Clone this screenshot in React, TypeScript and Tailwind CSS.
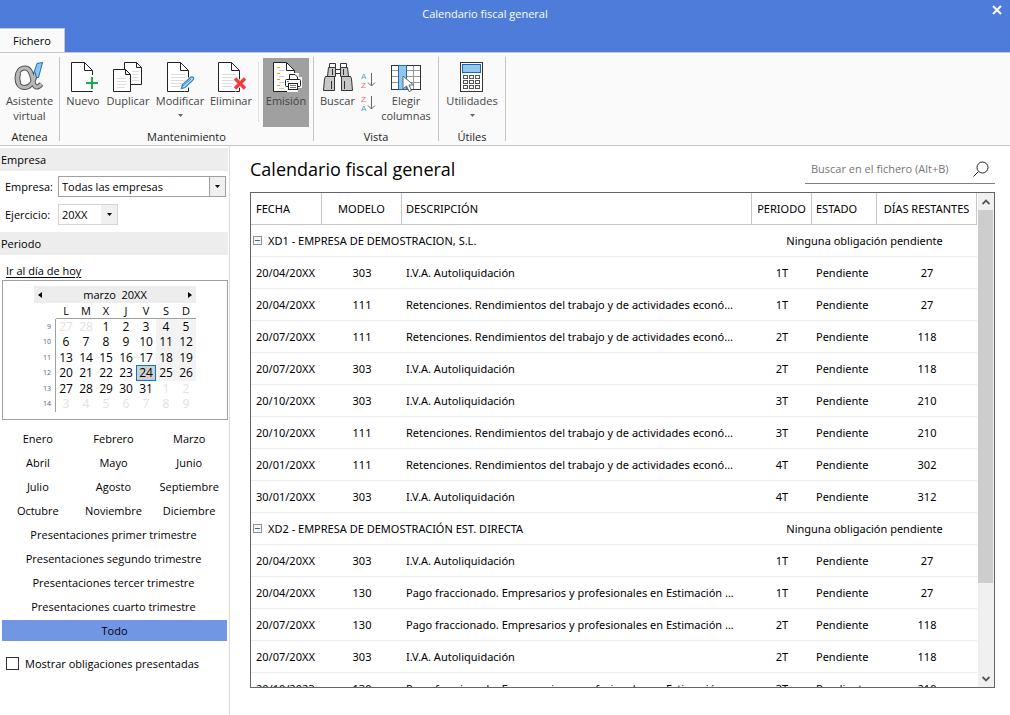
import { useState } from 'react';
import type { ReactNode } from 'react';

type Row = { fecha: string; modelo: string; descripcion: string; periodo: string; dias: number };

const RETENCIONES = 'Retenciones. Rendimientos del trabajo y de actividades econó...';
const PAGO = 'Pago fraccionado. Empresarios y profesionales en Estimación ...';
const IVA = 'I.V.A. Autoliquidación';

const empresas: { nombre: string; filas: Row[] }[] = [
    {
        nombre: 'XD1 - EMPRESA DE DEMOSTRACION, S.L.',
        filas: [
            { fecha: '20/04/20XX', modelo: '303', descripcion: IVA, periodo: '1T', dias: 27 },
            { fecha: '20/04/20XX', modelo: '111', descripcion: RETENCIONES, periodo: '1T', dias: 27 },
            { fecha: '20/07/20XX', modelo: '111', descripcion: RETENCIONES, periodo: '2T', dias: 118 },
            { fecha: '20/07/20XX', modelo: '303', descripcion: IVA, periodo: '2T', dias: 118 },
            { fecha: '20/10/20XX', modelo: '303', descripcion: IVA, periodo: '3T', dias: 210 },
            { fecha: '20/10/20XX', modelo: '111', descripcion: RETENCIONES, periodo: '3T', dias: 210 },
            { fecha: '20/01/20XX', modelo: '111', descripcion: RETENCIONES, periodo: '4T', dias: 302 },
            { fecha: '30/01/20XX', modelo: '303', descripcion: IVA, periodo: '4T', dias: 312 },
        ],
    },
    {
        nombre: 'XD2 - EMPRESA DE DEMOSTRACIÓN EST. DIRECTA',
        filas: [
            { fecha: '20/04/20XX', modelo: '303', descripcion: IVA, periodo: '1T', dias: 27 },
            { fecha: '20/04/20XX', modelo: '130', descripcion: PAGO, periodo: '1T', dias: 27 },
            { fecha: '20/07/20XX', modelo: '130', descripcion: PAGO, periodo: '2T', dias: 118 },
            { fecha: '20/07/20XX', modelo: '303', descripcion: IVA, periodo: '2T', dias: 118 },
            { fecha: '20/10/2023', modelo: '130', descripcion: PAGO, periodo: '3T', dias: 210 },
        ],
    },
];

const semanas = [
    { num: 9, dias: [27, 28, 1, 2, 3, 4, 5] },
    { num: 10, dias: [6, 7, 8, 9, 10, 11, 12] },
    { num: 11, dias: [13, 14, 15, 16, 17, 18, 19] },
    { num: 12, dias: [20, 21, 22, 23, 24, 25, 26] },
    { num: 13, dias: [27, 28, 29, 30, 31, 1, 2] },
    { num: 14, dias: [3, 4, 5, 6, 7, 8, 9] },
];

const meses = ['Enero', 'Febrero', 'Marzo', 'Abril', 'Mayo', 'Junio', 'Julio', 'Agosto', 'Septiembre', 'Octubre', 'Noviembre', 'Diciembre'];
const trimestres = ['primer', 'segundo', 'tercer', 'cuarto'];

/* ---------- Icons ---------- */

const Icon = ({ children }: { children: ReactNode }) => (
    <svg width="32" height="31" viewBox="0 0 32 31" fill="none" className="shrink-0" aria-hidden="true">
        {children}
    </svg>
);

const Sheet = ({ x, lines }: { x: number; lines?: boolean }) => (
    <g transform={`translate(${x} 0)`}>
        <path d="M.5 .5H13.5L21.5 8.5V29.5H.5Z" fill="#fff" stroke="#222" />
        <path d="M13.5 .5V8.5H21.5" stroke="#222" />
        {lines && <path d="M4 12.5H18M4 15.5H18M4 18.5H18M4 21.5H15M4 24.5H14" stroke="#dcdcdc" />}
    </g>
);

const LOOP = 'M22 10C20 20 16 25.500 10.500 25.500C5.500 25.500 3 21.500 3 16C3 10 6 6 11 6C17 6 18 14 19 19C20 25 22.500 27.500 27.500 22';

const AssistantIcon = () => (
    <Icon>
        <path d={LOOP} stroke="#555" strokeWidth="5" />
        <path d="M5 11C3.500 14 3.500 18 5 21.500" stroke="#555" strokeWidth="5" />
        <path d={LOOP} stroke="#b8b8b8" strokeWidth="3" />
        <path d="M5 11C3.500 14 3.500 18 5 21.500" stroke="#b8b8b8" strokeWidth="3" />
        <path d="M23 1.500L28.500 .5L24.500 15.500H22.500L20.500 9Z" fill="#8ec5ee" stroke="#1f6fb5" />
    </Icon>
);

const NewIcon = () => (
    <Icon>
        <Sheet x={4} />
        <path d="M25 13V29M17 21H32" stroke="#fafafa" strokeWidth="5" />
        <path d="M25 15V27M19 21H31" stroke="#1aab50" strokeWidth="2" />
    </Icon>
);

const CopyIcon = () => (
    <Icon>
        <path d="M12.500 .5H24.500L29.500 5.500V22.500H12.500Z" fill="#fff" stroke="#222" />
        <path d="M24.500 .5V5.500H29.500" stroke="#222" />
        <path d="M20 9.500H27M20 12.500H27M20 15.500H27M20 18.500H27" stroke="#dcdcdc" />
        <path d="M1.500 7.500H13.500L18.500 12.500V29.500H1.500Z" fill="#fff" stroke="#222" />
        <path d="M13.500 7.500V12.500H18.500" stroke="#222" />
        <path d="M5 16.500H14M5 19.500H14M5 22.500H14M5 25.500H13" stroke="#dcdcdc" />
    </Icon>
);

const EditIcon = () => (
    <Icon>
        <Sheet x={3} lines />
        <path d="M18 27L29 16" stroke="#fafafa" strokeWidth="7" />
        <path d="M17.500 26.500L18.500 22.500L26.500 15.500Q28 14.500 29.500 15.500Q30 17 28.500 18.500L21 25.500Z" fill="#cfe5f7" stroke="#2b87cf" strokeWidth="1.300" />
        <path d="M19 24L27 17" stroke="#2b87cf" />
    </Icon>
);

const DeleteIcon = () => (
    <Icon>
        <Sheet x={3} lines />
        <path d="M19 15L31 28M31 15L19 28" stroke="#fafafa" strokeWidth="5" />
        <path d="M20 16.500L30 26.500M30 16.500L20 26.500" stroke="#f03c3c" strokeWidth="3.500" />
    </Icon>
);

const PrintIcon = () => (
    <Icon>
        <Sheet x={3} />
        <path d="M7 5.500H10M7 11.500H10M7 17.500H10M7 23.500H10" stroke="#f59a23" strokeWidth="1.200" />
        <path d="M9 8.500H14M9 14.500H14M9 20.500H14M9 26.500H14" stroke="#ccc" />
        <path d="M14 15H18V11H29V15H32V26H28V30H17V26H14Z" fill="#fafafa" />
        <path d="M19.500 17V12.500H25L27.500 15V17" fill="#fff" stroke="#222" />
        <rect x="15.500" y="17.500" width="15" height="7" rx="1" fill="#fff" stroke="#222" />
        <rect x="18.500" y="21.500" width="9" height="6" fill="#fff" stroke="#222" />
        <path d="M20 23.500H26M20 25.500H26" stroke="#777" />
        <path d="M17 19.500H19" stroke="#2b87cf" />
    </Icon>
);

const Barrel = () => (
    <g fill="#c9c6c6" stroke="#333">
        <path d="M7.500 1.500H13.500V5.500H7.500Z" fill="#fff" />
        <path d="M6.500 5.500H13.500V14.500H5.500Z" />
        <path d="M3.500 14.500H12.500V28.500H1.500L2.500 17Z" />
        <path d="M9.500 19V27M10.500 7V13" />
    </g>
);

const BinocularsIcon = () => (
    <Icon>
        <path d="M13.500 7.500H18.500V11.500H13.500Z" fill="#fff" stroke="#333" />
        <Barrel />
        <g transform="translate(32 0) scale(-1 1)">
            <Barrel />
        </g>
    </Icon>
);

const SortIcon = ({ desc }: { desc?: boolean }) => (
    <svg width="15" height="19" viewBox="0 0 15 19" fill="none" aria-hidden="true">
        <text x="0" y="8" fontFamily="Liberation Sans, sans-serif" fontSize="8" fill={desc ? '#e86a6a' : '#4a9fdc'}>{desc ? 'Z' : 'A'}</text>
        <text x="0" y="17" fontFamily="Liberation Sans, sans-serif" fontSize="8" fill={desc ? '#4a9fdc' : '#e86a6a'}>{desc ? 'A' : 'Z'}</text>
        <path d="M10.500 2V15M7 11.500L10.500 15L14 11.500" stroke="#666" />
    </svg>
);

const ColumnsIcon = () => (
    <Icon>
        <rect x="1.500" y="3.500" width="29" height="24" fill="#fff" stroke="#333" />
        <path d="M2 8.500H30M2 14.500H30M2 20.500H30M23.500 4V27" stroke="#999" />
        <rect x="8.500" y="3.500" width="8" height="24" fill="#8fc6ee" stroke="#1b6cb4" />
        <path d="M13 14V27L16.500 24L19 29.500L21.500 28.500L19 23H23.500Z" fill="#fff" stroke="#666" />
    </Icon>
);

const CalculatorIcon = () => (
    <Icon>
        <rect x="4.500" y=".5" width="22" height="29" fill="#fff" stroke="#333" />
        <rect x="6.500" y="2.500" width="18" height="8" fill="#92c9f0" stroke="#1569b3" />
        {[13.5, 18.5, 23.5].map((y) =>
            [7.5, 13.5, 19.5].map((x) => <rect key={`${x}-${y}`} x={x} y={y} width="4" height="3" stroke="#555" />)
        )}
    </Icon>
);

const Caret = ({ className }: { className?: string }) => (
    <svg width="5" height="3" viewBox="0 0 5 3" className={className} fill="currentColor" aria-hidden="true">
        <path d="M0 0H5L2.500 3Z" />
    </svg>
);

/* ---------- Ribbon ---------- */

type RibbonButtonProps = { icon: ReactNode; label: string; width: string; menu?: boolean; active?: boolean };

const RibbonButton = ({ icon, label, width, menu, active }: RibbonButtonProps) => (
    <button type="button" className={`flex h-[69px] shrink-0 flex-col items-center pt-1 text-[#444] ${width} ${active ? 'bg-[#a0a0a0]' : ''}`}>
        {icon}
        <span className="leading-[15px]">{label}</span>
        {menu && <Caret className="mt-1.5 text-[#666]" />}
    </button>
);

const RibbonGroup = ({ title, children }: { title: string; children: ReactNode }) => (
    <section className="flex flex-col border-r border-[#c6c6c6] pt-px">
        <div className="flex">{children}</div>
        <h2 className="mt-1.5 text-center leading-2 text-[#222]">{title}</h2>
    </section>
);

const Ribbon = () => (
    <div className="flex border-y border-[#c6c6c6] bg-[#fafafa] py-1">
        <RibbonGroup title="Atenea">
            <RibbonButton icon={<AssistantIcon />} label="Asistente virtual" width="w-[59px]" />
        </RibbonGroup>
        <RibbonGroup title="Mantenimiento">
            <RibbonButton icon={<NewIcon />} label="Nuevo" width="w-[46px]" />
            <RibbonButton icon={<CopyIcon />} label="Duplicar" width="w-[44px]" />
            <RibbonButton icon={<EditIcon />} label="Modificar" width="w-[60px]" menu />
            <RibbonButton icon={<DeleteIcon />} label="Eliminar" width="w-[42px]" />
            <div className="mt-1 mr-1 ml-1.5 h-[60px] w-px bg-[#dedede]" />
            <RibbonButton icon={<PrintIcon />} label="Emisión" width="w-[46px]" active />
            <div className="w-1" />
        </RibbonGroup>
        <RibbonGroup title="Vista">
            <RibbonButton icon={<BinocularsIcon />} label="Buscar" width="w-[47px]" />
            <div className="flex w-[17px] flex-col gap-1 pt-[13px]">
                <button type="button" aria-label="Orden ascendente"><SortIcon /></button>
                <button type="button" aria-label="Orden descendente"><SortIcon desc /></button>
            </div>
            <RibbonButton icon={<ColumnsIcon />} label="Elegir columnas" width="w-14" />
            <div className="w-1" />
        </RibbonGroup>
        <RibbonGroup title="Útiles">
            <RibbonButton icon={<CalculatorIcon />} label="Utilidades" width="w-[66px]" menu />
        </RibbonGroup>
    </div>
);

/* ---------- Sidebar ---------- */

const SideHeading = ({ children }: { children: ReactNode }) => (
    <h2 className="mr-px h-[23px] bg-[#ededed] pl-px leading-[23px]">{children}</h2>
);

const Calendar = () => (
    <div className="mr-px ml-0.5 border border-[#a0a0a0] pt-[5px] pb-[7px]">
        <div className="mx-auto w-[162px]">
            <div className="flex h-[17px] items-center justify-between bg-[#ededed] px-1">
                <button type="button" aria-label="Mes anterior">
                    <svg width="4" height="6" viewBox="0 0 4 6"><path d="M4 0V6L0 3Z" /></svg>
                </button>
                <span className="whitespace-pre">marzo  20XX</span>
                <button type="button" aria-label="Mes siguiente">
                    <svg width="4" height="6" viewBox="0 0 4 6"><path d="M0 0V6L4 3Z" /></svg>
                </button>
            </div>
            <table className="w-full table-fixed border-separate border-spacing-0 text-center leading-[14px]">
                <thead>
                    <tr className="h-4">
                        <th className="w-[22px] p-0" />
                        {['L', 'M', 'X', 'J', 'V', 'S', 'D'].map((d) => (
                            <th key={d} className="border-b border-[#a0a0a0] p-0 font-normal">{d}</th>
                        ))}
                    </tr>
                </thead>
                <tbody>
                    {semanas.map((semana, fila) => (
                        <tr key={semana.num} className="odd:h-[15px] even:h-4">
                            <th className="border-r border-[#a0a0a0] p-0 pr-1 text-right text-[7px] font-normal text-[#4a6484]">{semana.num}</th>
                            {semana.dias.map((dia, i) => {
                                const fuera = (fila === 0 && dia > 20) || (fila > 3 && dia < 10);
                                const hoy = dia === 24;
                                const finde = i > 4 && fila < 4;
                                return (
                                    <td
                                        key={dia}
                                        className={`p-0 text-[12px] ${fuera ? 'text-[#e2e2e2]' : ''} ${finde ? 'bg-[#f3f3f3]' : ''} ${hoy ? 'bg-[#d0d0d0] outline -outline-offset-1 outline-[#0078d7]' : ''}`}
                                    >
                                        {dia}
                                    </td>
                                );
                            })}
                        </tr>
                    ))}
                </tbody>
            </table>
        </div>
    </div>
);

const Sidebar = () => {
    const [mostrar, setMostrar] = useState(false);

    return (
        <aside className="w-[230px] shrink-0 border-r border-[#dcdcdc] pt-0.5">
            <SideHeading>Empresa</SideHeading>
            <div className="grid grid-cols-[53px_1fr] items-center gap-y-[7px] pt-[5px] pr-[3px] pb-[7px] pl-[5px]">
                <label htmlFor="empresa">Empresa:</label>
                <div className="grid h-[21px] border border-[#a0a0a0]">
                    <select id="empresa" className="col-start-1 row-start-1 appearance-none pl-[3px]">
                        <option>Todas las empresas</option>
                    </select>
                    <span className="pointer-events-none col-start-1 row-start-1 flex w-4 items-center justify-center justify-self-end border-l border-[#a0a0a0] bg-[#f0f0f0]">
                        <Caret />
                    </span>
                </div>
                <label htmlFor="ejercicio">Ejercicio:</label>
                <div className="grid h-[21px] w-[60px] border border-[#d4d4d4]">
                    <select id="ejercicio" className="col-start-1 row-start-1 appearance-none pl-[3px]">
                        <option>20XX</option>
                    </select>
                    <span className="pointer-events-none col-start-1 row-start-1 flex w-4 items-center justify-center justify-self-end bg-[#f0f0f0]">
                        <Caret />
                    </span>
                </div>
            </div>
            <SideHeading>Periodo</SideHeading>
            <div className="flex h-[25px] items-end pb-px pl-1.5">
                <a href="#hoy" className="underline underline-offset-2">Ir al día de hoy</a>
            </div>
            <Calendar />
            <div className="mr-0.5 grid grid-cols-3 pt-[7px]">
                {meses.map((mes) => (
                    <button key={mes} type="button" className="h-6">{mes}</button>
                ))}
            </div>
            <div className="flex flex-col">
                {trimestres.map((t) => (
                    <button key={t} type="button" className="mr-0.5 h-6">Presentaciones {t} trimestre</button>
                ))}
                <button type="button" className="mx-0.5 mt-px h-[21px] bg-[#7096e4]">Todo</button>
            </div>
            <label className="mt-4 flex h-[13px] items-center gap-1.5 pl-1.5">
                <input
                    type="checkbox"
                    checked={mostrar}
                    onChange={(e) => setMostrar(e.target.checked)}
                    className="size-[13px] appearance-none border border-[#333] bg-white checked:bg-[#4d7cdb]"
                />
                Mostrar obligaciones presentadas
            </label>
        </aside>
    );
};

/* ---------- Table ---------- */

const HEAD = 'border-r border-b border-[#c6c6c6] p-0 font-normal';
const CELL = 'border-b border-[#ececec] p-0';

const FiscalTable = () => (
    <table className="w-full table-fixed border-separate border-spacing-0">
        <thead>
            <tr className="h-8">
                <th className={`${HEAD} w-[71px] pl-[5px] text-left`}>FECHA</th>
                <th className={`${HEAD} w-20`}>MODELO</th>
                <th className={`${HEAD} pl-1 text-left`}>DESCRIPCIÓN</th>
                <th className={`${HEAD} w-[60px]`}>PERIODO</th>
                <th className={`${HEAD} w-[65px] pl-1 text-left`}>ESTADO</th>
                <th className={`${HEAD} w-[100px]`}>DÍAS RESTANTES</th>
            </tr>
        </thead>
        {empresas.map((empresa) => (
            <tbody key={empresa.nombre}>
                <tr className="h-8">
                    <td colSpan={3} className={CELL}>
                        <div className="flex items-center gap-1.5 pl-0.5">
                            <button type="button" aria-label="Contraer" className="flex size-[9px] items-center justify-center border border-[#8f8f8f] bg-[#f6f6f6]">
                                <span className="h-px w-[5px] bg-[#3f5fae]" />
                            </button>
                            {empresa.nombre}
                        </div>
                    </td>
                    <td colSpan={3} className={`${CELL} text-center`}>Ninguna obligación pendiente</td>
                </tr>
                {empresa.filas.map((fila, i) => (
                    <tr key={i} className="h-8">
                        <td className={`${CELL} pl-[5px] whitespace-nowrap`}>{fila.fecha}</td>
                        <td className={`${CELL} text-center`}>{fila.modelo}</td>
                        <td className={`${CELL} truncate pl-1`}>{fila.descripcion}</td>
                        <td className={`${CELL} text-center`}>{fila.periodo}</td>
                        <td className={`${CELL} pl-1`}>Pendiente</td>
                        <td className={`${CELL} text-center`}>{fila.dias}</td>
                    </tr>
                ))}
            </tbody>
        ))}
    </table>
);

const ScrollBar = () => (
    <div className="ml-px flex w-4 shrink-0 flex-col items-center bg-[#f0f0f0]">
        <div className="flex h-[17px] items-center">
            <svg width="8" height="6" viewBox="0 0 8 6" fill="none"><path d="M.5 5L4 1.500L7.500 5" stroke="#555" strokeWidth="1.800" /></svg>
        </div>
        <div className="flex w-full flex-1 flex-col pr-px">
            <div className="h-[81%] bg-[#cdcdcd]" />
        </div>
        <div className="flex h-[17px] items-center">
            <svg width="8" height="6" viewBox="0 0 8 6" fill="none"><path d="M.5 1L4 4.500L7.500 1" stroke="#555" strokeWidth="1.800" /></svg>
        </div>
    </div>
);

const App = () => {
    const [busqueda, setBusqueda] = useState('');

    return (
        <div className="flex h-screen flex-col overflow-hidden bg-white font-['Open_Sans','Noto_Sans',sans-serif] text-[11px] leading-4 text-black">
            <header className="bg-[#4d7cdb]">
                <div className="flex h-7 items-center text-white">
                    <h1 className="flex-1 text-center">Calendario fiscal general</h1>
                    <button type="button" aria-label="Cerrar" className="flex w-10 justify-end pr-2 pb-2">
                        <svg width="10" height="10" viewBox="0 0 10 10"><path d="M1 1L9 9M9 1L1 9" stroke="#fff" strokeWidth="2" /></svg>
                    </button>
                </div>
                <nav className="flex">
                    <button type="button" className="-mb-px h-[25px] w-[65px] border-t border-r border-[#c6c6c6] bg-[#fafafa]">Fichero</button>
                </nav>
            </header>
            <Ribbon />
            <div className="flex min-h-0 flex-1">
                <Sidebar />
                <main className="flex min-w-0 flex-1 flex-col pt-2 pr-[15px] pb-[27px] pl-5">
                    <div className="mb-2 flex items-center justify-between">
                        <h2 className="text-[18px] leading-[30px]">Calendario fiscal general</h2>
                        <div className="flex h-[30px] w-[190px] items-center border-b border-[#808080] pr-1.5 pl-1.5">
                            <input
                                type="text"
                                aria-label="Buscar en el fichero"
                                placeholder="Buscar en el fichero (Alt+B)"
                                value={busqueda}
                                onChange={(e) => setBusqueda(e.target.value)}
                                className="min-w-0 flex-1 outline-none placeholder:text-[#767676]"
                            />
                            <svg width="16" height="16" viewBox="0 0 16 16" fill="none" stroke="#222">
                                <circle cx="9.500" cy="6.500" r="5.500" />
                                <path d="M5.500 10.500L.5 15.500" />
                            </svg>
                        </div>
                    </div>
                    <div className="flex min-h-0 flex-1 overflow-hidden border border-[#646464] font-['Noto_Sans',sans-serif]">
                        <div className="min-w-0 flex-1 overflow-hidden">
                            <FiscalTable />
                        </div>
                        <ScrollBar />
                    </div>
                </main>
            </div>
        </div>
    );
};

export default App;
